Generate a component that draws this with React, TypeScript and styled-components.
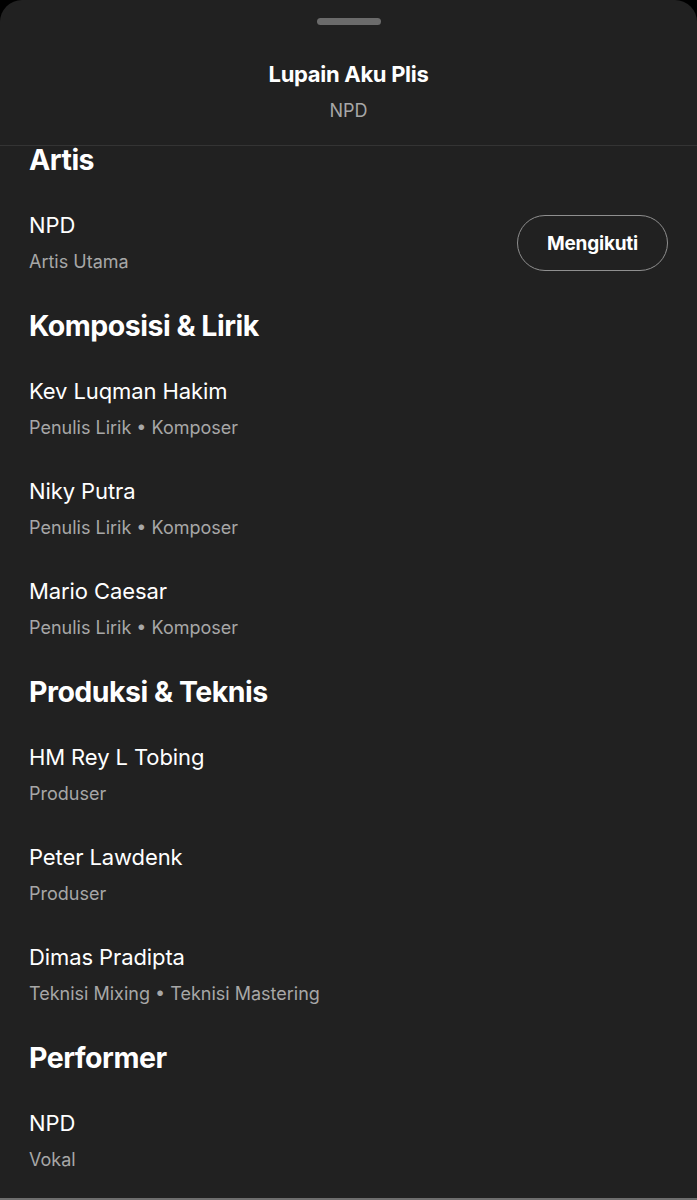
import React from "react";
import styled, { createGlobalStyle } from "styled-components";

const GlobalStyle = createGlobalStyle`
  html, body {
    margin: 0;
    padding: 0;
    background: #000000;
  }
  * {
    box-sizing: border-box;
  }
`;

const Sheet = styled.div`
  display: flex;
  flex-direction: column;
  height: 1200px;
  width: 697px;
  background-color: #212121;
  border-radius: 22px 22px 0 0;
  border-bottom: 2px solid #6e6e6e;
  overflow: hidden;
  font-family: Inter, "Noto Sans", "Liberation Sans", sans-serif;
  color: #ffffff;
`;

const Header = styled.div`
  display: flex;
  flex-direction: column;
  align-items: center;
  padding-top: 18px;
  height: 146px;
  border-bottom: 1px solid #343434;
  flex-shrink: 0;
`;

const Handle = styled.div`
  width: 64px;
  height: 7px;
  border-radius: 4px;
  background-color: #6b6b6b;
`;

const Title = styled.div`
  margin-top: 36px;
  font-size: 22px;
  line-height: 26px;
  font-weight: 700;
  letter-spacing: -0.3px;
`;

const Subtitle = styled.div`
  margin-top: 13px;
  font-size: 18px;
  line-height: 22px;
  color: #a7a7a7;
`;

const ScrollArea = styled.div`
  flex: 1;
`;

const List = styled.div`
  display: flex;
  flex-direction: column;
  padding: 0 29px;
`;

// the list is scrolled a little: the first heading sits right under the divider
const SectionTitle = styled.h2<{ $first?: boolean }>`
  margin: 0;
  padding: ${(p) => (p.$first ? "0 0 19px" : "15px 0")};
  font-size: 28.5px;
  line-height: ${(p) => (p.$first ? "28px" : "36px")};
  font-weight: 700;
  letter-spacing: -0.5px;
`;

const Row = styled.div`
  display: flex;
  align-items: center;
  justify-content: space-between;
  padding: 18px 0;
`;

const Info = styled.div`
  display: flex;
  flex-direction: column;
  gap: 10px;
`;

const Name = styled.div`
  font-size: 22px;
  line-height: 28px;
  letter-spacing: -0.1px;
`;

const Role = styled.div`
  font-size: 18px;
  line-height: 26px;
  color: #a7a7a7;
`;

const FollowButton = styled.button`
  width: 151px;
  height: 56px;
  border-radius: 28px;
  border: 1.5px solid #8f8f8f;
  background: transparent;
  color: #ffffff;
  font-family: inherit;
  font-size: 19px;
  font-weight: 700;
  letter-spacing: -0.2px;
`;

type Credit = { name: string; roles: string[]; follow?: boolean };
type Section = { title: string; credits: Credit[] };

const writer = ["Penulis Lirik", "Komposer"];

const sections: Section[] = [
  { title: "Artis", credits: [{ name: "NPD", roles: ["Artis Utama"], follow: true }] },
  {
    title: "Komposisi & Lirik",
    credits: [
      { name: "Kev Luqman Hakim", roles: writer },
      { name: "Niky Putra", roles: writer },
      { name: "Mario Caesar", roles: writer },
    ],
  },
  {
    title: "Produksi & Teknis",
    credits: [
      { name: "HM Rey L Tobing", roles: ["Produser"] },
      { name: "Peter Lawdenk", roles: ["Produser"] },
      { name: "Dimas Pradipta", roles: ["Teknisi Mixing", "Teknisi Mastering"] },
    ],
  },
  { title: "Performer", credits: [{ name: "NPD", roles: ["Vokal"] }] },
];

export default function App() {
  return (
    <>
      <GlobalStyle />
      <Sheet>
        <Header>
          <Handle />
          <Title>Lupain Aku Plis</Title>
          <Subtitle>NPD</Subtitle>
        </Header>

        <ScrollArea>
          <List>
            {sections.map((section, i) => (
              <React.Fragment key={section.title}>
                <SectionTitle $first={i === 0}>{section.title}</SectionTitle>
                {section.credits.map((credit) => (
                  <Row key={section.title + credit.name}>
                    <Info>
                      <Name>{credit.name}</Name>
                      <Role>{credit.roles.join(" • ")}</Role>
                    </Info>
                    {credit.follow && <FollowButton>Mengikuti</FollowButton>}
                  </Row>
                ))}
              </React.Fragment>
            ))}
          </List>
        </ScrollArea>
      </Sheet>
    </>
  );
}
